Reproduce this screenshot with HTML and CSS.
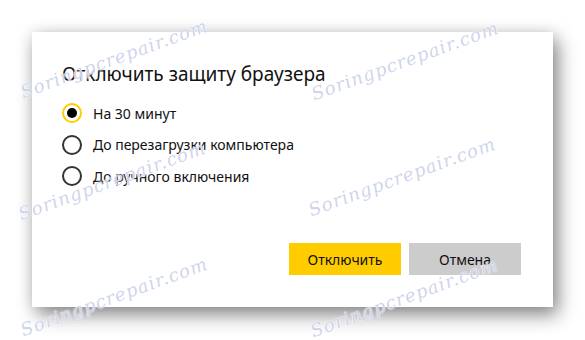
FILE: index.html
```html
<!DOCTYPE html>
<html lang="ru">
<head>
    <meta charset="UTF-8">
    <meta name="viewport" content="width=device-width, initial-scale=1.0">
    <title>Отключить защиту браузера</title>
    <link rel="stylesheet" href="styles.css">
</head>
<body>
    <div class="dialog">
        <div class="dialog-title">Отключить защиту браузера</div>

        <div class="options">
            <label class="option">
                <span class="radio checked"></span>
                <span class="option-text">На 30 минут</span>
            </label>
            <label class="option">
                <span class="radio"></span>
                <span class="option-text">До перезагрузки компьютера</span>
            </label>
            <label class="option">
                <span class="radio"></span>
                <span class="option-text">До ручного включения</span>
            </label>
        </div>

        <div class="actions">
            <button class="btn btn-primary">Отключить</button>
            <button class="btn btn-secondary">Отмена</button>
        </div>
    </div>

    <!-- Watermark overlay -->
    <div class="watermark wm-1">Soringpcrepair.com</div>
    <div class="watermark wm-2">Soringpcrepair.com</div>
    <div class="watermark wm-3">Soringpcrepair.com</div>
    <div class="watermark wm-4">Soringpcrepair.com</div>
    <div class="watermark wm-5">Soringpcrepair.com</div>
    <div class="watermark wm-6">Soringpcrepair.com</div>
</body>
</html>
```

FILE: styles.css
```css
:root {
    --accent: #ffcc00;
    --cancel: #cccccc;
    --text: #111111;
    --ring: #333333;
}

body {
    margin: 0;
    padding: 32px;
    background: #ffffff;
    font-family: "Noto Sans", "Open Sans", sans-serif;
    color: var(--text);
    position: relative;
    overflow: hidden;
    height: 340px;
    box-sizing: border-box;
}

.dialog {
    width: 521px;
    height: 275px;
    box-sizing: border-box;
    background: #ffffff;
    box-shadow: 5px 8px 18px rgba(0, 0, 0, 0.45), 0 0 14px rgba(0, 0, 0, 0.1);
    padding: 29px 32px 32px 30px;
    display: flex;
    flex-direction: column;
}

.dialog-title {
    font-size: 19px;
    line-height: 26px;
    margin-bottom: 15px;
}

.options {
    display: flex;
    flex-direction: column;
    gap: 9.5px;
}

.option {
    display: flex;
    align-items: center;
    gap: 11px;
    height: 22px;
    font-size: 14px;
    cursor: pointer;
}

.radio {
    width: 20px;
    height: 20px;
    box-sizing: border-box;
    border: 2px solid var(--ring);
    border-radius: 50%;
    display: flex;
    align-items: center;
    justify-content: center;
    flex-shrink: 0;
}

.radio.checked {
    border-color: var(--accent);
}

.radio.checked::after {
    content: "";
    width: 10px;
    height: 10px;
    border-radius: 50%;
    background: #000000;
}

.actions {
    margin-top: auto;
    display: flex;
    justify-content: flex-end;
    gap: 8px;
}

.btn {
    width: 112px;
    height: 32px;
    border: none;
    font-family: inherit;
    font-size: 14px;
    color: var(--text);
    cursor: pointer;
}

.btn-primary {
    background: var(--accent);
}

.btn-secondary {
    background: var(--cancel);
}

/* Watermark */
.watermark {
    position: absolute;
    width: 200px;
    text-align: center;
    font-family: "DejaVu Serif", serif;
    font-style: italic;
    font-size: 18px;
    letter-spacing: 1px;
    color: rgba(185, 193, 228, 0.7);
    text-shadow: 0 0 2px #ffffff, 0 0 1px #ffffff;
    transform: rotate(-20deg);
    pointer-events: none;
}

.wm-1 { left: 14px; top: 48px; }
.wm-2 { left: 305px; top: 50px; }
.wm-3 { left: 12px; top: 170px; }
.wm-4 { left: 302px; top: 166px; }
.wm-5 { left: 14px; top: 286px; }
.wm-6 { left: 304px; top: 287px; }
```
